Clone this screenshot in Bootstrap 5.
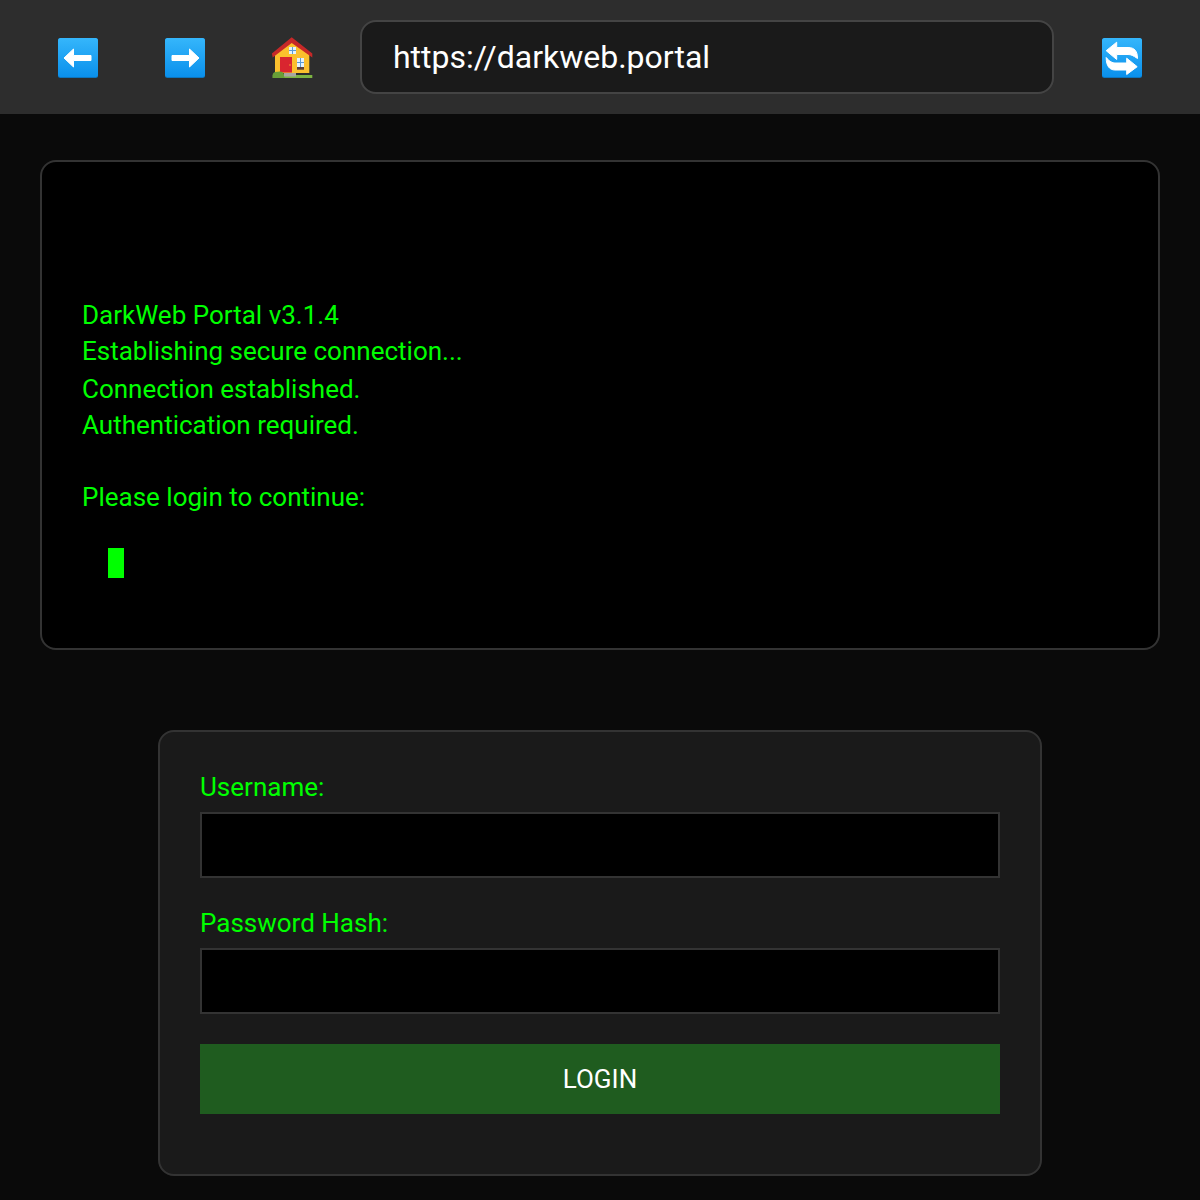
<!DOCTYPE html>
<html lang="en">
<head>
<meta charset="utf-8">
<title>DarkWeb Portal</title>
<link href="https://cdn.jsdelivr.net/npm/bootstrap@5.3.0/dist/css/bootstrap.min.css" rel="stylesheet">
<style>
html,body{background:#0a0a0a;font-family:Roboto,"Noto Sans",sans-serif;}
.topbar{height:114px;background:#2d2d2d;padding:20px 40px;}
.navicon{width:76.67px;height:74px;background:none;border:0;padding:2px 0 0;margin-right:30px;}
.navicon:last-child{margin-right:0;}
.navicon svg{display:block;margin:0 auto;}
.arrowmark{fill:#fff;stroke:#fff;stroke-width:1;stroke-linejoin:round;}
.addr{width:694px;height:74px;background:#1a1a1a;border:2px solid #444;border-radius:16px;color:#fff;font-size:32px;padding:0 31px;line-height:70px;}
.termbox{margin:46px 40px 0;height:490px;background:#000;border:2px solid #333;border-radius:16px;padding:135px 40px 0;color:#0f0;font-size:26px;line-height:36px;}
.snapline{margin-top:2px;}
.blinker{display:block;width:16px;height:30px;background:#0f0;margin:33px 0 0 26px;}
.loginbox{width:884px;height:446px;margin:80px auto 0;background:#1a1a1a;border:2px solid #333;border-radius:16px;padding:40px;}
.flabel{display:block;color:#0f0;font-size:26px;line-height:30px;margin-bottom:10px;}
.finput{display:block;width:800px;height:66px;background:#000;border:2px solid #333;border-radius:0;margin-bottom:30px;}
.fbtn{display:block;width:800px;height:70px;background:#1f5c1f;color:#fff;border:0;border-radius:0;font-size:26px;padding:0;}
</style>
</head>
<body class="m-0">
<div class="topbar d-flex align-items-center">
<button class="navicon" aria-label="Back">
<svg width="40" height="40" viewBox="0 0 40 40"><defs><linearGradient id="bl" x1="0" y1="0" x2="0" y2="1"><stop offset="0" stop-color="#35b6fb"/><stop offset="1" stop-color="#0a90ec"/></linearGradient></defs><rect width="40" height="40" rx="2.5" fill="#0d75bd"/><rect width="40" height="39" rx="2.5" fill="url(#bl)"/><path class="arrowmark" d="M6 20 15.500 11v6.500H33v5H15.500V29z"/></svg>
</button>
<button class="navicon" aria-label="Forward">
<svg width="40" height="40" viewBox="0 0 40 40"><rect width="40" height="40" rx="2.5" fill="#0d75bd"/><rect width="40" height="39" rx="2.5" fill="url(#bl)"/><path class="arrowmark" d="M34 20 24.500 11v6.500H7v5h17.500V29z"/></svg>
</button>
<button class="navicon" aria-label="Home">
<svg width="42" height="42" viewBox="0 0 42 42"><path d="M4 16 20.700 3 38.300 16v20H4z" fill="#fbc02d"/><path d="M.9 16.500 20.700.3 41.300 16.500V20.500L20.700 6 1.700 20.500z" fill="#c62828"/><rect x="9" y="20" width="12" height="15.500" fill="#d9252f"/><circle cx="19" cy="28" r=".7" fill="#fbc02d"/><rect x="18" y="10" width="7" height="7" fill="#e3f2fd"/><path d="M21.500 10v7M18 13.500h7" stroke="#5b9bd5"/><rect x="26" y="21" width="7" height="9" fill="#e3f2fd"/><path d="M29.500 21v9M26 25.500h7" stroke="#5b9bd5"/><rect x="26" y="30" width="7" height="2.700" fill="#5d4037"/><rect x="1.700" y="38" width="39.600" height="3" fill="#7cb342"/><path d="M1.700 41v-3.500c0-2.200 3-3.300 5.500-2.700 2-1 4.500 0 5.500 1.700l1 4.500z" fill="#689f38"/><rect x="13" y="36" width="12" height="3.500" fill="#a7a7a0"/></svg>
</button>
<div class="addr">https://darkweb.portal</div>
<button class="navicon ms-auto" aria-label="Reload">
<svg width="40" height="40" viewBox="0 0 40 40"><rect width="40" height="40" rx="2.500" fill="#0d75bd"/><rect width="40" height="39" rx="2.500" fill="url(#bl)"/><path class="arrowmark" d="M14.700 4.200 4.200 12.700 14.700 21.500v-5H26c3 0 5 1 9.500 4 0-7.500-3-11-9.500-11H14.700z"/><path class="arrowmark" d="M24.700 20.200 35.200 28.700 24.700 36.500v-4.500H13c-5.500 0-8.800-4-8.800-12.500 3.300 4 6.300 5.500 8.800 5.500h11.700z"/></svg>
</button>
</div>
<div class="termbox">
<div>DarkWeb Portal v3.1.4</div>
<div>Establishing secure connection...</div>
<div class="snapline">Connection established.</div>
<div>Authentication required.</div>
<div>&nbsp;</div>
<div>Please login to continue:</div>
<span class="blinker"></span>
</div>
<form class="loginbox">
<label class="flabel">Username:</label>
<input class="finput" type="text">
<label class="flabel">Password Hash:</label>
<input class="finput" type="password">
<button class="fbtn" type="button">LOGIN</button>
</form>
<script src="https://cdn.jsdelivr.net/npm/bootstrap@5.3.0/dist/js/bootstrap.bundle.min.js"></script>
</body>
</html>
